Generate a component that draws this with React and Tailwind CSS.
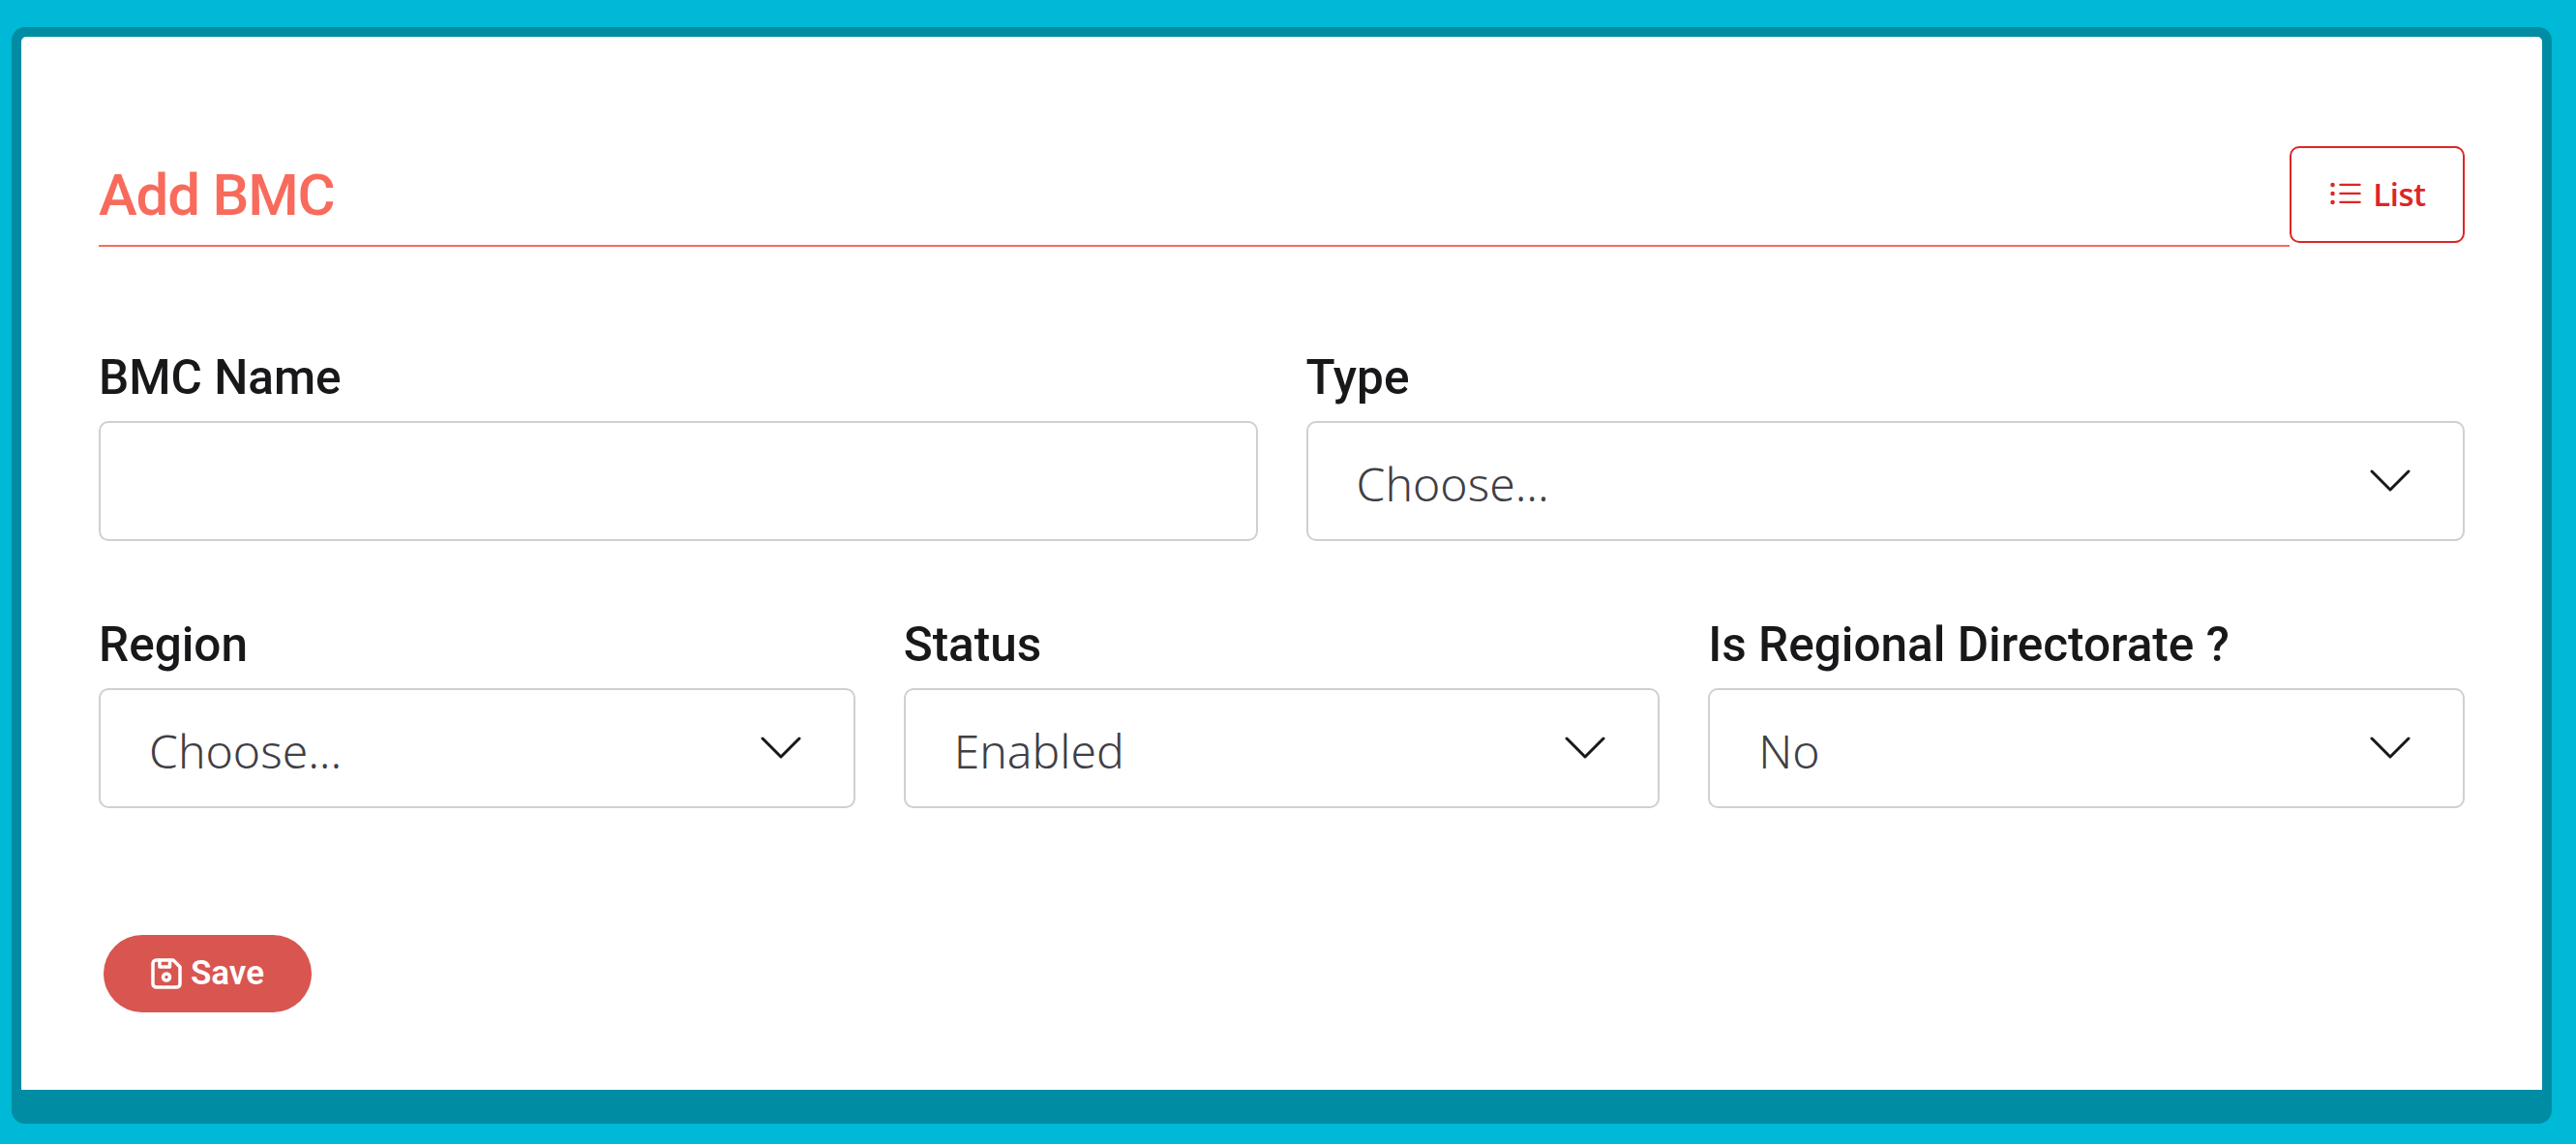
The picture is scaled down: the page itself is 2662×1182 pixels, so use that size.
import React from "react";
import { TbDeviceFloppy } from "react-icons/tb";
import { BsListUl } from "react-icons/bs";

const SelectField = ({ label, value }) => (
  <div>
    <label className="block font-['Roboto',sans-serif] font-medium text-[49.5px] leading-[52px] text-[#18181b] mb-[19px]">
      {label}
    </label>
    <div className="relative">
      <select
        defaultValue={value}
        className="block w-full h-[124px] appearance-none bg-white border-2 border-[#cfcfd4] rounded-[10px] pl-[50px] pr-[100px] pt-[6px] font-['Noto_Sans',sans-serif] font-light text-[48px] text-[#3f3f46]"
      >
        <option>{value}</option>
      </select>
      <svg
        viewBox="0 0 44 25"
        fill="none"
        stroke="#18181b"
        strokeWidth="3"
        strokeLinecap="round"
        strokeLinejoin="round"
        className="absolute right-[55px] top-[49px] w-[44px] h-[25px] pointer-events-none"
      >
        <polyline points="3,3 22,22 41,3" />
      </svg>
    </div>
  </div>
);

const App = () => {
  return (
    <div className="h-screen bg-[#00b9d6] pt-[28px] pl-[12px] pr-[25px] pb-[21px]">
      <div className="h-full rounded-[14px] bg-[#008ca3] pt-[10px] px-[10px] pb-[35px]">
        <div className="h-full bg-white rounded-t-[5px] pt-[113px] px-[80px]">
          <div className="flex items-start">
            <h1 className="flex-1 h-[104px] border-b-2 border-[#f86b5c] pt-[16px] font-['Roboto',sans-serif] font-medium text-[60px] leading-[70px] tracking-[-1.2px] text-[#f86b5c]">
              Add BMC
            </h1>
            <button className="w-[181px] h-[100px] flex items-center justify-center gap-[10px] border-2 border-[#dc2626] rounded-[10px] font-['Open_Sans',sans-serif] font-semibold text-[33px] tracking-[-0.5px] text-[#dc2626]">
              <BsListUl className="w-[36px] h-[36px]" />
              List
            </button>
          </div>

          <div className="grid grid-cols-2 gap-x-[50px] mt-[109px]">
            <div>
              <label className="block font-['Roboto',sans-serif] font-medium text-[49.5px] leading-[52px] text-[#18181b] mb-[19px]">
                BMC Name
              </label>
              <input
                type="text"
                className="block w-full h-[124px] bg-white border-2 border-[#cfcfd4] rounded-[10px] px-[50px]"
              />
            </div>
            <SelectField label="Type" value="Choose..." />
          </div>

          <div className="grid grid-cols-3 gap-x-[50px] mt-[81px]">
            <SelectField label="Region" value="Choose..." />
            <SelectField label="Status" value="Enabled" />
            <SelectField label="Is Regional Directorate ?" value="No" />
          </div>

          <button className="ml-[5px] mt-[131px] w-[215px] h-[80px] pr-[5px] flex items-center justify-center gap-[4px] rounded-full bg-[#d95550] font-['Roboto',sans-serif] font-semibold text-[35px] text-white">
            <TbDeviceFloppy className="w-[42px] h-[42px]" />
            Save
          </button>
        </div>
      </div>
    </div>
  );
};

export default App;
